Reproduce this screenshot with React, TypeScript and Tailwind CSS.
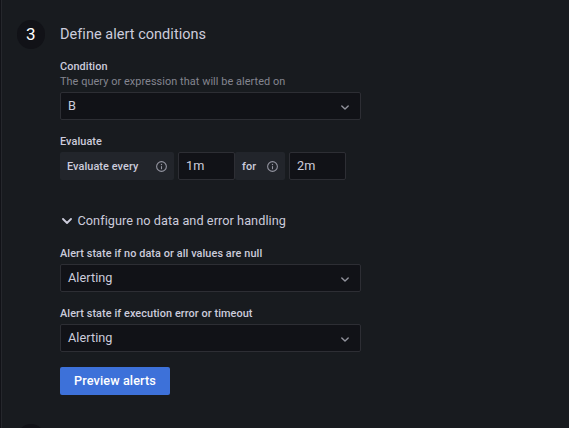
import type { ReactNode } from 'react';

function Chevron({ className }: { className: string }) {
  return (
    <svg viewBox="0 0 10 6" className={className} fill="none" stroke="currentColor" strokeLinecap="round" strokeLinejoin="round">
      <path d="M1 1l4 4 4-4" />
    </svg>
  );
}

function InfoIcon() {
  return (
    <svg viewBox="0 0 24 24" className="size-[13px] shrink-0 text-[#9394a0]" fill="currentColor">
      <path d="M12 2a10 10 0 1 0 10 10A10 10 0 0 0 12 2Zm0 18a8 8 0 1 1 8-8 8 8 0 0 1-8 8Zm0-9a1 1 0 0 0-1 1v4a1 1 0 0 0 2 0v-4a1 1 0 0 0-1-1Zm0-4a1.25 1.25 0 1 0 0 2.5A1.25 1.25 0 0 0 12 7Z" />
    </svg>
  );
}

function Label({ children }: { children: ReactNode }) {
  return <div className="h-[15px] text-[10.9px] leading-[15px] font-medium tracking-[0.075px] whitespace-nowrap">{children}</div>;
}

function Select({ value }: { value: string }) {
  return (
    <div className="flex h-7 w-[301px] items-center justify-between rounded-[2px] border border-[#2d2e34] bg-[#111217] pr-[11px] pl-[7px] text-[12.7px] tracking-[0.06px]">
      <span>{value}</span>
      <Chevron className="mt-[3px] h-[5px] w-[8px] stroke-[1.7] text-[#92939d]" />
    </div>
  );
}

function TextBox({ value }: { value: string }) {
  return (
    <div className="flex h-7 w-[57px] items-center rounded-[2px] border border-[#2d2e34] bg-[#111217] pl-[7px] text-[12.7px] tracking-[0.06px]">
      {value}
    </div>
  );
}

function InlineLabel({ className, children }: { className: string; children: ReactNode }) {
  return (
    <div className={`flex h-7 items-center justify-between rounded-[2px] bg-[#22252b] pr-[6px] pl-[7px] text-[10.9px] font-medium tracking-[0.075px] ${className}`}>
      <span className="pt-[2px]">{children}</span>
      <InfoIcon />
    </div>
  );
}

export default function App() {
  return (
    <div className="h-[428px] w-[569px] overflow-hidden bg-[#111217] pl-px font-[Roboto,sans-serif] text-[#ccccdc]">
      <div className="h-full border-l border-[#25272c] bg-[#181b1f] pl-[15px]">
        <div className="flex h-[424px] pt-5">
          <div className="flex h-[29px] w-7 shrink-0 items-center justify-center rounded-full bg-[#111217] pr-[0.5px] text-[17px] text-white">3</div>
          <div className="ml-[15px] flex flex-col items-start">
            <h2 className="mt-[5px] h-5 text-[14.5px] leading-5 tracking-[0.03px]">Define alert conditions</h2>
            <div className="mt-[14px]">
              <Label>Condition</Label>
            </div>
            <div className="h-[15px] text-[10.9px] leading-[15px] tracking-[0.06px] text-[#84858f]">The query or expression that will be alerted on</div>
            <div className="mt-[3px]">
              <Select value="B" />
            </div>
            <div className="mt-[14px]">
              <Label>Evaluate</Label>
            </div>
            <div className="mt-[3px] flex">
              <InlineLabel className="w-[114px]">Evaluate every</InlineLabel>
              <div className="ml-1"><TextBox value="1m" /></div>
              <InlineLabel className="w-[50px]">for</InlineLabel>
              <div className="ml-1"><TextBox value="2m" /></div>
            </div>
            <div className="mt-[31px] flex h-5 items-center pl-[2px] text-[12.7px] tracking-[0.06px]">
              <Chevron className="h-[6px] w-[10px] stroke-[1.8]" />
              <span className="ml-[5.5px]">Configure no data and error handling</span>
            </div>
            <div className="mt-[15px]">
              <Label>Alert state if no data or all values are null</Label>
            </div>
            <div className="mt-[3px]">
              <Select value="Alerting" />
            </div>
            <div className="mt-[14px]">
              <Label>Alert state if execution error or timeout</Label>
            </div>
            <div className="mt-[3px]">
              <Select value="Alerting" />
            </div>
            <button className="mt-[15px] h-7 w-[110px] rounded-[2px] bg-[#3d71d9] text-[12.7px] font-medium tracking-[0.1px] text-white">Preview alerts</button>
          </div>
        </div>
        <div className="h-[29px] w-7 rounded-full bg-[#111217]" />
      </div>
    </div>
  );
}
